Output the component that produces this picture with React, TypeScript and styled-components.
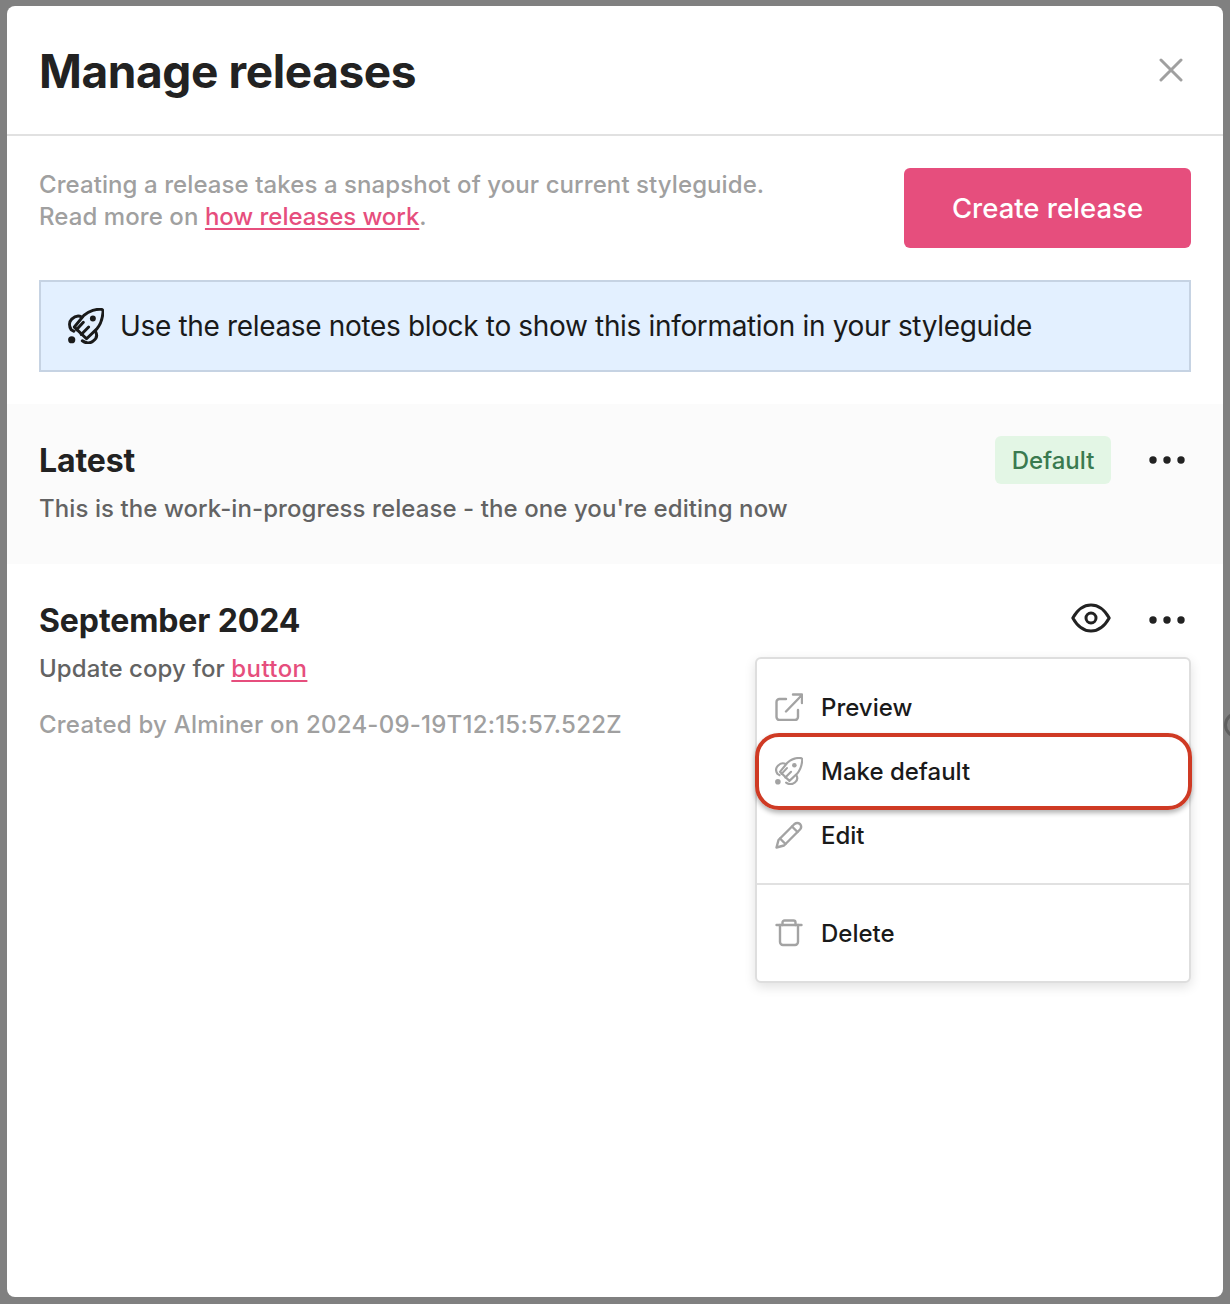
import styled, { createGlobalStyle } from "styled-components";

const GlobalStyle = createGlobalStyle`
    html, body {
        margin: 0;
        padding: 0;
    }

    body {
        background: #808080;
        font-family: Inter, "Liberation Sans", sans-serif;
    }
`;

const Backdrop = styled.div`
    position: relative;
    box-sizing: border-box;
    width: 1230px;
    height: 1304px;
    padding: 6px 7px 7px 7px;
    background: #808080;
    overflow: hidden;
`;

/* sliver of a control peeking out behind the modal */
const PeekingRing = styled.div`
    position: absolute;
    left: 1224px;
    top: 712px;
    width: 20px;
    height: 20px;
    border: 3px solid #5e5e5e;
    border-radius: 50%;
`;

const Modal = styled.div`
    height: 100%;
    background: #fff;
    border-radius: 8px;
    overflow: hidden;
`;

const Header = styled.header`
    box-sizing: border-box;
    height: 130px;
    padding: 0 28px 0 32px;
    display: flex;
    align-items: center;
    justify-content: space-between;
    border-bottom: 2px solid #e1e1e1;
`;

const Title = styled.h1`
    margin: 0;
    padding-top: 1px;
    font-size: 46px;
    font-weight: 700;
    letter-spacing: -0.4px;
    color: #222;
`;

const Svg = styled.svg`
    display: block;
    fill: none;
    stroke: currentColor;
    stroke-linecap: round;
    stroke-linejoin: round;
    flex: none;
`;

const CloseButton = styled.button`
    width: 48px;
    height: 48px;
    padding: 0;
    border: 0;
    background: none;
    display: flex;
    align-items: center;
    justify-content: center;
    color: #a0a0a0;
`;

const Intro = styled.div`
    padding: 32px;
    display: flex;
    align-items: flex-start;
    justify-content: space-between;
`;

const IntroText = styled.p`
    margin: 0;
    padding-top: 1px;
    font-size: 24px;
    font-weight: 500;
    line-height: 32px;
    letter-spacing: 0.08px;
    color: #a0a0a0;
`;

const TextLink = styled.a`
    color: #e64e7d;
    text-decoration: underline;
    text-underline-offset: 3px;
`;

const IntroLink = styled(TextLink)`
    letter-spacing: -0.05px;
`;

const InlineLink = styled(TextLink)`
    letter-spacing: 0.4px;
`;

const PrimaryButton = styled.button`
    width: 287px;
    height: 80px;
    padding: 0;
    border: 0;
    border-radius: 6px;
    background: #e64e7d;
    color: #fff;
    font-family: inherit;
    font-size: 27.5px;
    font-weight: 500;
`;

const Banner = styled.div`
    box-sizing: border-box;
    height: 92px;
    margin: 0 32px 32px 32px;
    padding: 0 0 0 27px;
    display: flex;
    align-items: center;
    gap: 16px;
    background: #e3f0ff;
    border: 2px solid #c6d3e3;
    font-size: 28px;
    letter-spacing: -0.34px;
    color: #1a1a1a;
`;

const Release = styled.section<{ $shaded?: boolean }>`
    position: relative;
    padding: 32px 32px 39px 32px;
    background: ${(p) => (p.$shaded ? "#fbfbfb" : "#fff")};
`;

const ReleaseHead = styled.div`
    height: 48px;
    display: flex;
    align-items: center;
    justify-content: space-between;
`;

const ReleaseName = styled.h2`
    margin: 0;
    font-size: 32px;
    font-weight: 700;
    letter-spacing: -0.1px;
    color: #222;
`;

const Actions = styled.div`
    display: flex;
    align-items: center;
    gap: 32px;
`;

const Badge = styled.span`
    box-sizing: border-box;
    height: 48px;
    width: 116px;
    display: flex;
    align-items: center;
    justify-content: center;
    border-radius: 6px;
    background: #e3f6e5;
    color: #3a7a50;
    font-size: 24px;
    font-weight: 500;
`;

const IconButton = styled.button`
    width: 48px;
    height: 48px;
    padding: 0;
    border: 0;
    background: none;
    display: flex;
    align-items: center;
    justify-content: center;
    color: #222;
`;

const EyeButton = styled(IconButton)`
    margin-right: -4px;
    padding-bottom: 4px;
`;

const Description = styled.p`
    margin: 9px 0 0 0;
    font-size: 24px;
    font-weight: 500;
    line-height: 32px;
    letter-spacing: 0.08px;
    color: #636363;
`;

const Meta = styled.p`
    margin: 24px 0 0 0;
    font-size: 24px;
    font-weight: 500;
    line-height: 32px;
    letter-spacing: 0.22px;
    color: #a0a0a0;
`;

const Menu = styled.div`
    position: absolute;
    top: 93px;
    right: 32px;
    box-sizing: border-box;
    width: 436px;
    padding: 16px 0;
    background: #fff;
    border: 2px solid #dedede;
    border-radius: 6px;
    box-shadow: 0 4px 12px rgba(0, 0, 0, 0.12);
`;

const MenuItem = styled.div`
    position: relative;
    height: 64px;
    padding-left: 18px;
    display: flex;
    align-items: center;
    gap: 18px;
    color: #a3a3a3;
`;

const MenuLabel = styled.span`
    font-size: 24px;
    font-weight: 500;
    color: #1a1a1a;
`;

const MenuDivider = styled.div`
    height: 2px;
    margin: 16px 0;
    background: #e1e1e1;
`;

const Highlight = styled.div`
    position: absolute;
    inset: -6px -3px -7px -2px;
    border: 4px solid #cf3a24;
    border-radius: 24px;
    box-shadow: 0 3px 5px rgba(0, 0, 0, 0.3);
`;

function RocketIcon({ size, stroke }: { size: number; stroke: number }) {
    return (
        <Svg width={size} height={size} viewBox="0 0 34 34" strokeWidth={stroke}>
            <path d="M15 7C20 2.5 27 0.8 31.5 1.3C33 1.5 33.3 3 33 4.5C32.5 10 30.5 16 27 20L17.5 29L6 18Z" />
            <path d="M13 8.5C9 6.5 6 8 3.5 10.5C1 13 0.8 17 3 20.5L5.5 22" />
            <path d="M26 22C28 26 27 29 24 31C21 33.5 17 33.5 13.5 31" />
            <path d="M8 20.5L14.5 13.5M12.5 25L19.5 18" />
            <circle cx="23.5" cy="10" r="2.8" fill="currentColor" stroke="none" />
            <circle cx="3.5" cy="30" r="3.4" fill="currentColor" stroke="none" />
        </Svg>
    );
}

function MoreIcon() {
    return (
        <Svg width="38" height="10" viewBox="0 0 38 10">
            <circle cx="5" cy="5" r="3.7" fill="currentColor" stroke="none" />
            <circle cx="19" cy="5" r="3.7" fill="currentColor" stroke="none" />
            <circle cx="33" cy="5" r="3.7" fill="currentColor" stroke="none" />
        </Svg>
    );
}

function EyeIcon() {
    return (
        <Svg width="40" height="30" viewBox="0 0 40 30" strokeWidth="3">
            <path d="M1.8 15C6 7.5 12.5 2 20 2C27.5 2 34 7.5 38.2 15C34 22.5 27.5 28 20 28C12.5 28 6 22.5 1.8 15Z" />
            <circle cx="20" cy="15" r="5" />
        </Svg>
    );
}

function ExternalIcon() {
    return (
        <Svg width="28" height="28" viewBox="0 0 28 28" strokeWidth="2.4">
            <path d="M11 6H4.5A3 3 0 0 0 1.5 9V24A3 3 0 0 0 4.5 27H20A3 3 0 0 0 23 24V17" />
            <path d="M11 18.5L27 2M18 1.5H27V10" />
        </Svg>
    );
}

function PencilIcon() {
    return (
        <Svg width="28" height="28" viewBox="0 0 28 28" strokeWidth="2.4">
            <path d="M1.5 26.5L3.5 19L19.5 3Q22.3 0.8 25 3Q27.3 6 25 8.5L9 24.5Z" />
            <path d="M5 17.5L10.5 23M17 5.5L22.5 11" />
        </Svg>
    );
}

function TrashIcon() {
    return (
        <Svg width="28" height="28" viewBox="0 0 28 28" strokeWidth="2.4">
            <path d="M1.5 6H26.5" />
            <path d="M7.5 6V3.5A2 2 0 0 1 9.5 1.5H18.5A2 2 0 0 1 20.5 3.5V6" />
            <path d="M5 6V23A3 3 0 0 0 8 26H20A3 3 0 0 0 23 23V6" />
        </Svg>
    );
}

export default function App() {
    return (
        <Backdrop>
            <GlobalStyle />
            <PeekingRing />
            <Modal>
                <Header>
                    <Title>Manage releases</Title>
                    <CloseButton>
                        <Svg width="24" height="24" viewBox="0 0 24 24" strokeWidth="3">
                            <path d="M2 2L22 22M22 2L2 22" />
                        </Svg>
                    </CloseButton>
                </Header>
                <Intro>
                    <IntroText>
                        Creating a release takes a snapshot of your current styleguide.
                        <br />
                        Read more on <IntroLink>how releases work</IntroLink>.
                    </IntroText>
                    <PrimaryButton>Create release</PrimaryButton>
                </Intro>
                <Banner>
                    <RocketIcon size={36} stroke={2.8} />
                    Use the release notes block to show this information in your styleguide
                </Banner>
                <Release $shaded>
                    <ReleaseHead>
                        <ReleaseName>Latest</ReleaseName>
                        <Actions>
                            <Badge>Default</Badge>
                            <IconButton><MoreIcon /></IconButton>
                        </Actions>
                    </ReleaseHead>
                    <Description>This is the work-in-progress release - the one you're editing now</Description>
                </Release>
                <Release>
                    <ReleaseHead>
                        <ReleaseName>September 2024</ReleaseName>
                        <Actions>
                            <EyeButton><EyeIcon /></EyeButton>
                            <IconButton><MoreIcon /></IconButton>
                        </Actions>
                    </ReleaseHead>
                    <Description>Update copy for <InlineLink>button</InlineLink></Description>
                    <Meta>Created by Alminer on 2024-09-19T12:15:57.522Z</Meta>
                    <Menu>
                        <MenuItem>
                            <ExternalIcon />
                            <MenuLabel>Preview</MenuLabel>
                        </MenuItem>
                        <MenuItem>
                            <RocketIcon size={28} stroke={2.6} />
                            <MenuLabel>Make default</MenuLabel>
                            <Highlight />
                        </MenuItem>
                        <MenuItem>
                            <PencilIcon />
                            <MenuLabel>Edit</MenuLabel>
                        </MenuItem>
                        <MenuDivider />
                        <MenuItem>
                            <TrashIcon />
                            <MenuLabel>Delete</MenuLabel>
                        </MenuItem>
                    </Menu>
                </Release>
            </Modal>
        </Backdrop>
    );
}
